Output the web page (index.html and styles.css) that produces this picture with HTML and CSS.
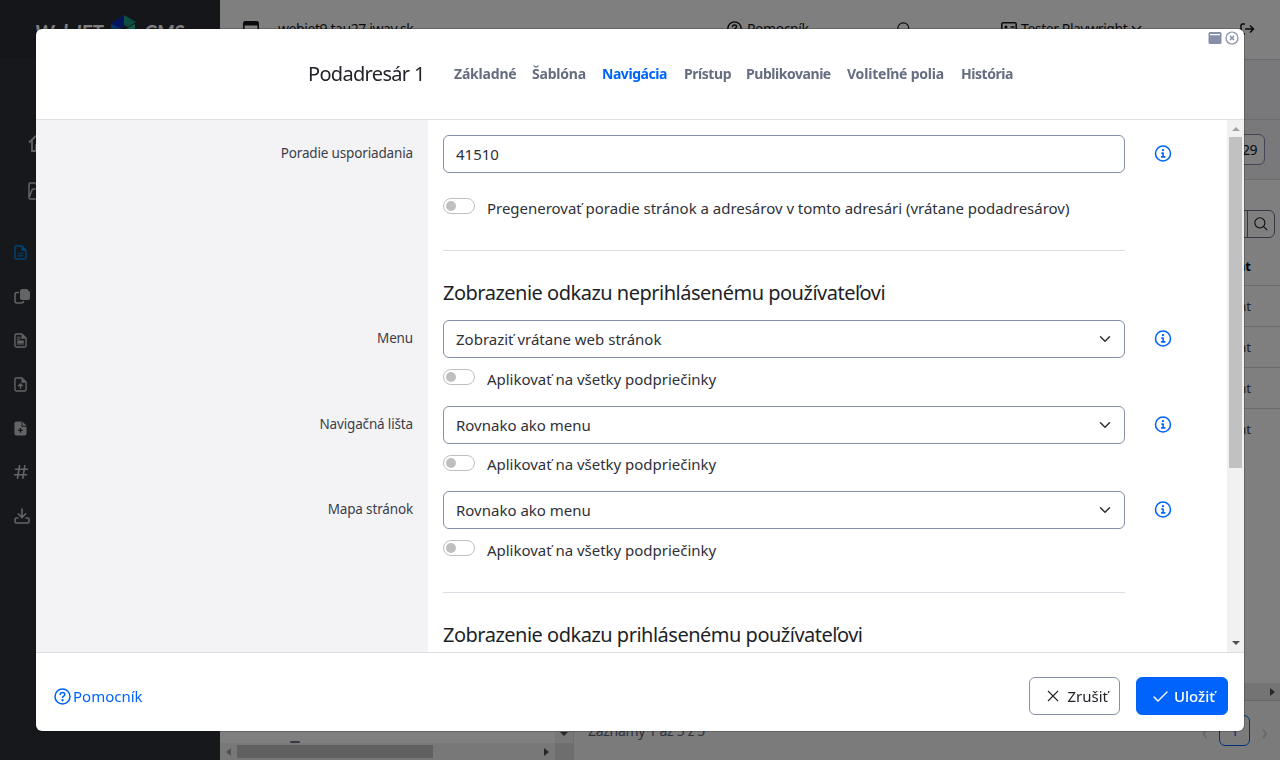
FILE: index.html
```html
<!DOCTYPE html>
<html lang="sk">
<head>
<meta charset="utf-8">
<title>WebJET CMS</title>
<link rel="stylesheet" href="styles.css">
</head>
<body>
<svg class="defs" width="0" height="0">
  <symbol id="info" viewBox="0 0 24 24"><g fill="none" stroke="currentColor" stroke-width="2.2" stroke-linecap="round" stroke-linejoin="round"><circle cx="12" cy="12" r="10.6"/><path d="M10.500 11.500h1.700v5M10 16.800h4.600"/></g><circle cx="12" cy="7.300" r="1.600" fill="currentColor"/></symbol>
  <symbol id="help" viewBox="0 0 24 24"><g fill="none" stroke="currentColor" stroke-width="2.2" stroke-linecap="round" stroke-linejoin="round"><circle cx="12" cy="12" r="10.6"/><path d="M8.700 9c.2-2 1.500-2.600 3.300-2.600 2 0 3.300 1 3.300 2.700 0 2-3.200 2.400-3.300 4.400"/></g><circle cx="12" cy="17.300" r="1.600" fill="currentColor"/></symbol>
  <symbol id="search" viewBox="0 0 16 16"><g fill="none" stroke="currentColor" stroke-width="1.200" stroke-linecap="round"><circle cx="6.700" cy="6.700" r="5.800"/><path d="M10.800 10.800l4 4"/></g></symbol>
  <symbol id="file" viewBox="0 0 14 16"><path d="M2.500 1h6L13 5.300v8.200a1.500 1.500 0 0 1-1.500 1.500h-9A1.500 1.500 0 0 1 1 13.500v-11A1.500 1.500 0 0 1 2.500 1z" fill="none" stroke="currentColor" stroke-width="1.500"/><path d="M8 1l5 5H8z" fill="currentColor"/></symbol>
  <symbol id="chev" viewBox="0 0 16 16"><path d="M2 5l6 6 6-6" fill="none" stroke="currentColor" stroke-width="2" stroke-linecap="round" stroke-linejoin="round"/></symbol>
</svg>

<div class="app">
  <aside class="side">
    <div class="logo"><span>WebJET</span>
      <svg width="26" height="28" viewBox="0 0 26 28"><path d="M0 8L13 0v11L0 19z" fill="#0b2bb8"/><path d="M13 0l12 7-8 5-4-2z" fill="#1c9d83"/><path d="M0 9l13 6v13L0 20z" fill="#1565d8"/><path d="M13 15l11-6v11l-11 8z" fill="#24c492"/></svg>
      <span>CMS</span></div>
    <nav class="menu">
      <a class="main home"><svg width="20" height="20" viewBox="0 0 20 20"><path d="M1 9.500L10 1l9 8.500M4 7.500V18h4v-6h4v6h4V7.500" fill="none" stroke="currentColor" stroke-width="1.800"/></svg></a>
      <a class="main"><svg width="20" height="18" viewBox="0 0 20 18"><path d="M1 15V2q0-1 1-1h5l2 2h7v4M1 16l3-8q.4-1 1.400-1H19l-3 10H2q-1 0-1-1z" fill="none" stroke="currentColor" stroke-width="1.500"/></svg></a>
      <a class="active"><svg width="13" height="15" viewBox="0 0 14 16"><use href="#file"/><path d="M4 8.800h6M4 11.600h6" stroke="currentColor" stroke-width="1.300"/></svg></a>
      <a><svg width="17" height="16" viewBox="0 0 17 16"><path d="M8 1h5l3 3v6q0 2-2 2H8q-2 0-2-2V3q0-2 2-2z" fill="currentColor"/><path d="M5 4.500H3Q1 4.500 1 6.500V13q0 2 2 2h4.500q2 0 2-2" fill="none" stroke="currentColor" stroke-width="1.500"/></svg></a>
      <a><svg width="13" height="15" viewBox="0 0 14 16"><use href="#file"/><path d="M3 4.500h4M3 6.500h4M3 11.800h8" stroke="currentColor"/><path d="M3.500 8h7v3h-7z" fill="currentColor"/></svg></a>
      <a><svg width="13" height="15" viewBox="0 0 14 16"><use href="#file"/><path d="M7 12.500V7.500M4.600 9.800L7 7.400l2.400 2.400" fill="none" stroke="currentColor" stroke-width="1.500"/></svg></a>
      <a><svg width="13" height="15" viewBox="0 0 14 16"><path d="M2.500.5H8V6h5.500v7.500q0 2-2 2h-9q-2 0-2-2v-11q0-2 2-2zM9 .5L13.500 5H9z" fill="currentColor"/><path d="M7 7.500v5M4.500 10h5" class="cut"/></svg></a>
      <a><svg width="14" height="14" viewBox="0 0 14 14"><path d="M5.500.8L3.500 13.200M10.800.8l-2 12.400M1.500 4.300h12M.5 9.700h12" fill="none" stroke="currentColor" stroke-width="1.600" stroke-linecap="round"/></svg></a>
      <a><svg width="17" height="16" viewBox="0 0 17 16"><path d="M8 1v8M4.300 5.800L8 9.500l3.700-3.700M4 10H2.500Q1 10 1 11.500v2Q1 15 2.500 15h11q1.500 0 1.500-1.500v-2Q15 10 13.500 10H12" fill="none" stroke="currentColor" stroke-width="1.600" stroke-linecap="round"/></svg></a>
    </nav>
  </aside>
  <div class="page">
    <header class="top">
      <span class="domain"><svg width="16" height="16" viewBox="0 0 16 16"><rect x=".8" y=".8" width="14.400" height="14.400" rx="1.500" fill="none" stroke="currentColor" stroke-width="1.600"/><path d="M1 1h14v3.500H1z" fill="currentColor"/></svg>webjet9.tau27.iway.sk</span>
      <span class="tophelp"><svg width="15" height="15"><use href="#help"/></svg>Pomocník</span>
      <svg class="topsearch" width="15" height="15"><use href="#search"/></svg>
      <span class="user"><svg width="16" height="14" viewBox="0 0 16 14"><rect x=".8" y=".8" width="14.400" height="12.400" rx="1.500" fill="none" stroke="currentColor" stroke-width="1.500"/><circle cx="5" cy="5" r="1.500"/><path d="M2.800 10q2.200-4 4.400 0M9.500 5h4M9.500 8h4" fill="none" stroke="currentColor" stroke-width="1.300"/></svg>Tester Playwright<svg width="11" height="11"><use href="#chev"/></svg></span>
      <svg class="exit" width="15" height="12" viewBox="0 0 15 12"><path d="M5 1H2.500Q1 1 1 2.500v7Q1 11 2.500 11H5M5 6h8.500M10 2.500L13.500 6 10 9.500" fill="none" stroke="currentColor" stroke-width="1.500"/></svg>
    </header>
    <div class="bar"></div>
    <div class="bar filter"><span class="num">29</span></div>
    <div class="split">
      <section class="tree">
        <div class="treebody"><span class="peek"></span><div class="vtrack"><i class="down"></i></div></div>
        <div class="hscroll"><i class="left"></i><div class="thumb"></div><i class="right"></i></div>
      </section>
      <section class="table">
        <div class="find"><span></span><b><svg width="14" height="14"><use href="#search"/></svg></b></div>
        <div class="cell head">nt</div><div class="cell">nt</div><div class="cell">nt</div><div class="cell">nt</div><div class="cell last">nt</div>
        <div class="grow"></div>
        <div class="htrack"><i class="right"></i></div>
        <div class="pager"><span class="count">Záznamy 1 až 5 z 5</span><em>‹</em><span class="pg">1</span><em>›</em></div>
      </section>
    </div>
  </div>
</div>

<div class="backdrop">
  <div class="modal">
    <div class="mhead">
      <h5>Podadresár 1</h5>
      <ul class="tabs"><li class="t1">Základné</li><li class="t2">Šablóna</li><li class="t3 on">Navigácia</li><li class="t4">Prístup</li><li class="t5">Publikovanie</li><li class="t6">Voliteľné polia</li><li class="t7">História</li></ul>
      <div class="win">
        <svg width="14" height="12" viewBox="0 0 14 12"><rect x=".5" width="13" height="12" rx="1.500" fill="currentColor"/><path d="M2 2h10v1.300H2z" fill="#fff"/></svg>
        <svg width="14" height="14" viewBox="0 0 14 14"><circle cx="7" cy="7" r="6" fill="none" stroke="currentColor" stroke-width="1.200"/><path d="M5 5l4 4M9 5L5 9" stroke="currentColor" stroke-width="1.500"/></svg>
      </div>
    </div>
    <div class="mbody">
      <div class="form">
        <div class="row"><label>Poradie usporiadania</label><div class="input"><span>41510</span></div><svg class="tip"><use href="#info"/></svg></div>
        <div class="check first"><i></i><span>Pregenerovať poradie stránok a adresárov v tomto adresári (vrátane podadresárov)</span></div>
        <div class="line"></div>
        <h4>Zobrazenie odkazu neprihlásenému používateľovi</h4>
        <div class="row"><label>Menu</label><div class="input"><span>Zobraziť vrátane web stránok</span><svg width="12" height="12"><use href="#chev"/></svg></div><svg class="tip"><use href="#info"/></svg></div>
        <div class="check"><i></i><span>Aplikovať na všetky podpriečinky</span></div>
        <div class="row gap"><label>Navigačná lišta</label><div class="input"><span>Rovnako ako menu</span><svg width="12" height="12"><use href="#chev"/></svg></div><svg class="tip"><use href="#info"/></svg></div>
        <div class="check mid"><i></i><span>Aplikovať na všetky podpriečinky</span></div>
        <div class="row gap2"><label>Mapa stránok</label><div class="input"><span>Rovnako ako menu</span><svg width="12" height="12"><use href="#chev"/></svg></div><svg class="tip"><use href="#info"/></svg></div>
        <div class="check"><i></i><span>Aplikovať na všetky podpriečinky</span></div>
        <div class="line"></div>
        <h4>Zobrazenie odkazu prihlásenému používateľovi</h4>
      </div>
      <div class="scroll"><i class="up"></i><div class="thumb"></div><i class="down"></i></div>
    </div>
    <div class="mfoot">
      <a class="help"><svg width="17" height="17"><use href="#help"/></svg>Pomocník</a>
      <button class="btn"><svg width="12" height="12" viewBox="0 0 12 12"><path d="M1 1l10 10M11 1L1 11" stroke="currentColor" stroke-width="1.100"/></svg>Zrušiť</button>
      <button class="btn save"><svg width="15" height="11" viewBox="0 0 15 11"><path d="M1 6l4 4L14 1" fill="none" stroke="currentColor" stroke-width="1.400" stroke-linecap="round"/></svg>Uložiť</button>
    </div>
  </div>
</div>
</body>
</html>
```
FILE: styles.css
```css
* { box-sizing: border-box; }
body { margin: 0; height: 760px; overflow: hidden; font: 14px/20px "Noto Sans", sans-serif; color: #13151b; }
.defs { position: absolute; }
svg { flex: none; }
i { display: block; flex: none; }

.app { display: flex; height: 760px; }
.side { width: 220px; background: #2f3138; }
.logo { height: 60px; padding: 5px 0 0 35px; display: flex; align-items: center; background: #2b2c34; border-bottom: 1px solid #33343c; color: #fff; font: italic 700 20px/24px Lato, sans-serif; }
.logo span:first-child { width: 76px; }
.logo svg { margin-right: 7px; align-self: flex-start; margin-top: 10px; }
.menu { display: flex; flex-direction: column; color: #c7c8cc; }
.menu a { height: 44px; display: flex; align-items: center; padding-left: 14px; }
.menu a.main { height: 48px; padding-left: 28px; }
.menu a.home { margin-top: 59px; }
.menu a.active { color: #0087e8; margin-top: 15px; }
.cut { stroke: #2f3138; stroke-width: 1.5; }

.page { flex: 1; display: flex; flex-direction: column; background: #fff; min-width: 0; }
.top { height: 60px; border-bottom: 1px solid #d8d8df; display: flex; align-items: center; padding-left: 23px; }
.top span { display: flex; align-items: center; white-space: nowrap; letter-spacing: -.42px; padding-bottom: 2px; }
.domain { gap: 19px; width: 484px; }
.tophelp { gap: 5px; width: 170px; }
.topsearch { margin-right: 89px; }
.user { gap: 4px; width: 240px; }
.exit { margin: 0 0 2px -1px; }
.bar { height: 60px; background: #f3f3f6; border-bottom: 1px solid #d8d8df; }
.filter { padding: 14px 15px 0 0; }
.num { display: block; margin-left: auto; width: 60px; height: 31px; border: 1px solid #868ea8; border-radius: 6px; background: #fff; text-align: right; line-height: 29px; padding-right: 7px; letter-spacing: -.5px; }
.split { display: flex; flex: 1; }
.tree { width: 353px; display: flex; flex-direction: column; }
.treebody { flex: 1; display: flex; justify-content: space-between; }
.peek { align-self: flex-end; width: 10px; height: 2px; margin-left: 70px; border-top: 2px solid #6d7488; border-radius: 5px; }
.vtrack { width: 18px; background: #f1f1f1; display: flex; align-items: flex-end; justify-content: center; padding-bottom: 7px; }
.hscroll { height: 17px; background: #f1f1f1; display: flex; align-items: center; padding: 0 6px; border-right: 18px solid #dcdcdc; }
.hscroll .thumb { width: 196px; height: 13px; background: #c1c1c1; margin: 0 auto 0 6px; }
.table { flex: 1; display: flex; flex-direction: column; background: #fff; border-left: 1px solid #d9dbe6; }
.find { margin: 30px 5px 0 auto; width: 100px; height: 28px; border: 1px solid #68708a; border-radius: 6px; display: flex; justify-content: flex-end; }
.find b { width: 27px; border-left: 1px solid #68708a; display: flex; align-items: center; justify-content: center; }
.cell { height: 41px; border-bottom: 1px solid #d4d5dc; text-align: right; padding: 10px 29px 0 0; font-size: 13px; color: #444; }
.cell.head { height: 48px; padding-top: 18px; font-weight: 700; color: #000; }
.cell.last { border: 0; }
.grow { flex: 1; }
.htrack { height: 17px; background: #e8e8e8; display: flex; align-items: center; justify-content: flex-end; padding-right: 5px; }
.pager { height: 60px; border-top: 1px solid #cdd0dd; background: #f6f6f8; display: flex; align-items: center; padding: 0 12px 0 14px; color: #5d6478; }
.count { margin-right: auto; letter-spacing: -.3px; }
.pg { width: 31px; height: 31px; border: 1px solid #0063fb; border-radius: 6px; text-align: center; line-height: 29px; color: #0063fb; margin: 0 11px; }
.pager em { font: 24px/24px Lato, sans-serif; color: #ccc; }
.left, .right { border: 4px solid transparent; width: 4px; height: 8px; }
.left { border-right: 5px solid #a3a3a3; border-left: 0; }
.right { border-left: 5px solid #505050; border-right: 0; }
.up, .down { width: 8px; height: 4px; border: 4px solid transparent; }
.up { border-bottom-color: #a3a3a3; border-top: 0; }
.down { border-top-color: #505050; border-bottom: 0; }

.backdrop { position: fixed; inset: 0; background: rgba(0, 0, 0, .5); padding: 29px 36px; }
.modal { height: 702px; border-radius: 6px; background: #fff; display: flex; flex-direction: column; overflow: hidden; box-shadow: 0 0 0 1px rgba(0, 0, 0, .2); }
.mhead { height: 91px; border-bottom: 1px solid #dee0e5; display: flex; align-items: center; padding-left: 272px; }
.mhead h5 { margin: 0; width: 146px; font: 400 20px/30px "Noto Sans", sans-serif; letter-spacing: -.68px; white-space: nowrap; color: #212329; }
.tabs { display: flex; margin: 0; padding: 0; list-style: none; font-weight: 700; color: #666d80; white-space: nowrap; letter-spacing: -.45px; }
.t1 { width: 78px; } .t2 { width: 70px; } .t3 { width: 82px; } .t4 { width: 62px; } .t5 { width: 101px; } .t6 { width: 114px; }
.t1, .t2, .t6 { letter-spacing: -.2px; }
.tabs .on { color: #0063fb; }
.win { margin: 0 5px 0 auto; align-self: flex-start; padding-top: 2px; display: flex; align-items: center; gap: 3px; color: #868ea8; }
.mbody { height: 532px; display: flex; overflow: hidden; }
.form { flex: 1; padding-top: 15px; background: linear-gradient(90deg, #f3f3f6 392px, #fff 392px); }
.row { display: flex; align-items: center; height: 38px; }
.row label { width: 377px; text-align: right; margin-right: 30px; padding-bottom: 3px; letter-spacing: -.15px; color: #3b3e47; font-size: 13.5px; }
.input { width: 682px; height: 38px; border: 1px solid #868ea8; border-radius: 6px; display: flex; align-items: center; justify-content: space-between; padding: 0 13px 0 12px; font-size: 15px; color: #2f3138; }
.tip { width: 18px; height: 17px; margin: 0 0 1px 29px; color: #0063fb; }
.check { margin: 11px 0 0 407px; height: 20px; display: flex; font-size: 15px; letter-spacing: -.02px; white-space: nowrap; color: #2f3138; }
.check.first { margin-top: 25px; }
.check.mid { line-height: 18px; }
.check i { width: 32px; height: 16px; border: 1px solid #bfbfbf; border-radius: 8px; margin-right: 12px; padding: 2px; }
.check i::before { content: ""; display: block; width: 10px; height: 10px; border-radius: 50%; background: #bfbfbf; }
.gap { margin-top: 17px; }
.gap2 { margin-top: 16px; }
.line { width: 682px; height: 1px; background: #dcdee6; margin: 32px 0 0 407px; }
.form h4 { margin: 27px 0 12px 407px; font: 400 20px/30px "Noto Sans", sans-serif; letter-spacing: -.5px; white-space: nowrap; color: #1d1f26; }
.scroll { width: 17px; background: #f1f1f1; display: flex; flex-direction: column; align-items: center; padding: 7px 0; }
.scroll .thumb { width: 13px; height: 331px; background: #c1c1c1; margin: 6px 0 auto; }
.mfoot { flex: 1; border-top: 1px solid #dcdee6; display: flex; align-items: center; padding: 8px 16px 0 18px; }
.help { display: flex; align-items: center; gap: 2px; margin-right: auto; color: #0063fb; font-size: 15px; }
.btn { height: 38px; width: 91px; margin-left: 16px; border: 1px solid #868ea8; border-radius: 6px; background: #fff; color: #212329; font: 15px "Noto Sans", sans-serif; letter-spacing: 0; display: flex; align-items: center; justify-content: flex-end; gap: 8px; padding: 0 11px; white-space: nowrap; }
.save { width: 92px; background: #0063fb; border-color: #0063fb; color: #fff; font-weight: 500; gap: 6px; padding-right: 12px; }
```
